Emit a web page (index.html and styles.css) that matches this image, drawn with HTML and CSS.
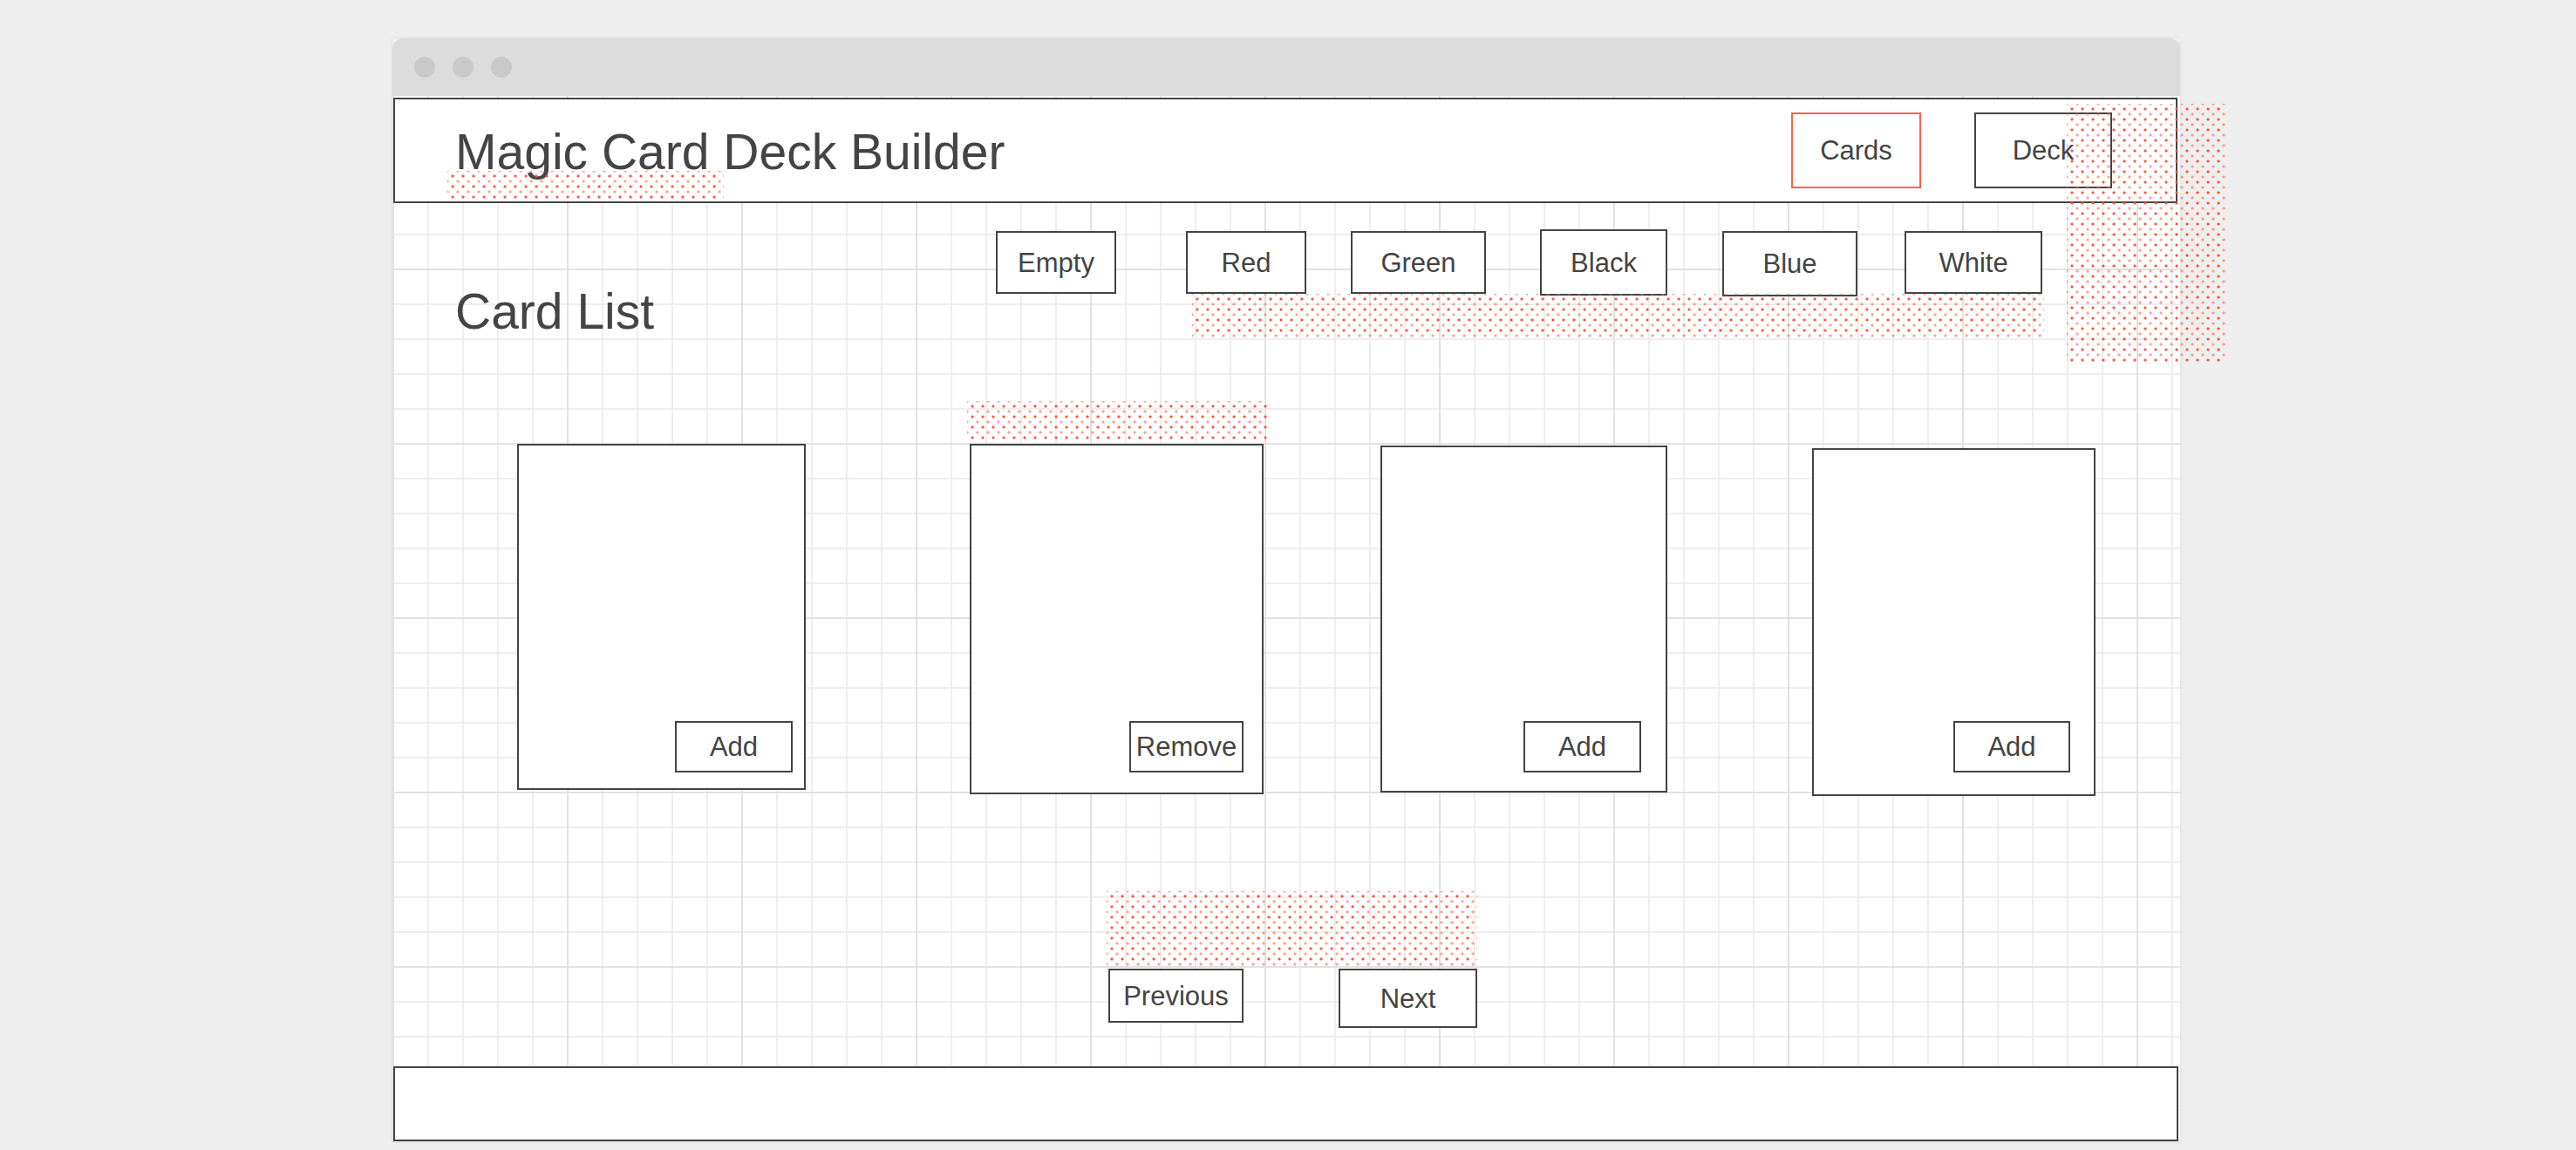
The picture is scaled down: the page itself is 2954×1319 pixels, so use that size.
FILE: index.html
```html
<!DOCTYPE html>
<html lang="en">
<head>
<meta charset="utf-8">
<title>Magic Card Deck Builder</title>
<link rel="stylesheet" href="styles.css">
</head>
<body>
<div class="window">
  <div class="titlebar">
    <span class="light"></span>
    <span class="light"></span>
    <span class="light"></span>
  </div>
  <div class="canvas">
    <header class="header">
      <h1 class="title">Magic Card Deck Builder</h1>
      <nav class="nav">
        <button class="btn nav-btn nav-btn--cards">Cards</button>
        <button class="btn nav-btn nav-btn--deck">Deck</button>
      </nav>
    </header>
    <main class="main">
      <div class="toolbar">
        <h2 class="subtitle">Card List</h2>
        <div class="filters">
          <button class="btn filter filter--empty">Empty</button>
          <button class="btn filter filter--red">Red</button>
          <button class="btn filter filter--green">Green</button>
          <button class="btn filter filter--black">Black</button>
          <button class="btn filter filter--blue">Blue</button>
          <button class="btn filter filter--white">White</button>
        </div>
      </div>
      <div class="cards">
        <div class="card card--1"><button class="btn card-btn card-btn--add">Add</button></div>
        <div class="card card--2"><button class="btn card-btn card-btn--remove">Remove</button></div>
        <div class="card card--3"><button class="btn card-btn card-btn--add">Add</button></div>
        <div class="card card--4"><button class="btn card-btn card-btn--add card-btn--narrow">Add</button></div>
      </div>
      <div class="pager">
        <button class="btn page-btn page-btn--prev">Previous</button>
        <button class="btn page-btn page-btn--next">Next</button>
      </div>
    </main>
    <footer class="footer"></footer>
  </div>
  <div class="dots dots--title"></div>
  <div class="dots dots--filters"></div>
  <div class="dots dots--nav"></div>
  <div class="dots dots--card"></div>
  <div class="dots dots--pager"></div>
</div>
</body>
</html>
```

FILE: styles.css
```css
* { box-sizing: border-box; }

html, body {
  margin: 0;
  padding: 0;
}

body {
  background: #eeeeee;
  font-family: "Liberation Sans", Arial, sans-serif;
  color: #444444;
  overflow: hidden;
  height: 1319px;
}

.window {
  position: relative;
  width: 2050px;
  margin: 44px 0 0 450px;
  box-shadow: 0 0 4px rgba(0, 0, 0, 0.08);
}

.titlebar {
  height: 66px;
  background: #dcdcdc;
  border-radius: 12px 12px 0 0;
  display: flex;
  align-items: center;
  gap: 20px;
  padding-left: 25px;
}

.light {
  width: 24px;
  height: 24px;
  border-radius: 50%;
  background: #c9c9c9;
}

.canvas {
  background-color: #ffffff;
  background-image:
    linear-gradient(to right, #e1e1e1 0 2px, transparent 2px),
    linear-gradient(to bottom, #e1e1e1 0 2px, transparent 2px),
    linear-gradient(to right, #eeeeee 0 2px, transparent 2px),
    linear-gradient(to bottom, #eeeeee 0 2px, transparent 2px);
  background-size: 200px 100%, 100% 200px, 40px 100%, 100% 40px;
  background-position: 0 0, 0 -2px, 0 0, 0 -2px;
  padding-top: 2px;
  padding-bottom: 1px;
}

.btn {
  font-family: "Liberation Sans", Arial, sans-serif;
  font-size: 31px;
  color: #444444;
  background: #ffffff;
  border: 2px solid #444444;
  border-radius: 0;
  padding: 0;
  margin: 0;
  display: flex;
  align-items: center;
  justify-content: center;
  line-height: 1;
}

/* Header */
.header {
  height: 121px;
  margin: 0 3px 0 1px;
  border: 2px solid #444444;
  background: #ffffff;
  display: flex;
  align-items: center;
  padding: 0 73px 0 69px;
}

.title {
  margin: 3px 0 0 0;
  font-size: 57px;
  line-height: 56px;
  font-weight: normal;
}

.nav {
  margin-left: auto;
  display: flex;
  gap: 61px;
}

.nav-btn { height: 87px; }
.nav-btn--cards { width: 149px; border-color: #ff6347; }
.nav-btn--deck { width: 158px; }

/* Main */
.main {
  padding-left: 72px;
}

.toolbar {
  display: flex;
  align-items: flex-start;
  margin-top: 30px;
}

.subtitle {
  flex: 0 0 620px;
  margin: 66px 0 0 0;
  font-size: 57px;
  line-height: 56px;
  font-weight: normal;
}

.filters {
  display: flex;
  align-items: flex-start;
}

.filter { height: 72px; margin-top: 2px; }
.filter--empty { width: 138px; }
.filter--red { width: 138px; margin-left: 80px; }
.filter--green { width: 155px; margin-left: 51px; }
.filter--black { width: 146px; height: 76px; margin-top: 0; margin-left: 62px; }
.filter--blue { width: 155px; height: 75px; margin-left: 63px; }
.filter--white { width: 158px; margin-left: 54px; }

/* Cards */
.cards {
  display: flex;
  align-items: flex-start;
  margin-top: 124px;
}

.card {
  width: var(--w);
  height: var(--h);
  margin-left: var(--ml);
  margin-top: var(--mt);
  padding-top: var(--pt);
  padding-right: var(--pr);
  border: 2px solid #444444;
  background: #ffffff;
  display: flex;
  justify-content: flex-end;
  align-items: flex-start;
}

.card--1 { --w: 331px; --h: 397px; --ml: 71px;  --mt: 0px; --pt: 316px; --pr: 13px; }
.card--2 { --w: 337px; --h: 402px; --ml: 188px; --mt: 0px; --pt: 316px; --pr: 21px; }
.card--3 { --w: 329px; --h: 398px; --ml: 134px; --mt: 2px; --pt: 314px; --pr: 28px; }
.card--4 { --w: 325px; --h: 399px; --ml: 166px; --mt: 5px; --pt: 311px; --pr: 27px; }

.card-btn { height: 59px; }
.card-btn--add { width: 135px; }
.card-btn--narrow { width: 134px; }
.card-btn--remove { width: 131px; }

/* Pager */
.pager {
  display: flex;
  align-items: flex-start;
  margin-top: 198px;
  padding-left: 749px;
}

.page-btn--prev { width: 155px; height: 62px; }
.page-btn--next { width: 159px; height: 68px; margin-left: 109px; }

/* Footer */
.footer {
  height: 86px;
  margin: 44px 2px 0 1px;
  border: 2px solid #444444;
  background: #ffffff;
}

/* Annotation dot overlays */
.dots {
  position: absolute;
  pointer-events: none;
  background-image:
    radial-gradient(circle, rgba(255, 75, 50, 0.95) 0 1.2px, rgba(255, 75, 50, 0) 1.9px),
    radial-gradient(circle, rgba(255, 100, 80, 0.6) 0 1.2px, rgba(255, 100, 80, 0) 2px);
  background-size: 12px 12px, 12px 12px;
  background-position: 0 0, 6px 6px;
}

.dots--title   { left: 63px;   top: 152px; width: 317px; height: 32px; }
.dots--filters { left: 917px;  top: 293px; width: 977px; height: 50px; }
.dots--nav     { left: 1920px; top: 75px;  width: 184px; height: 297px; }
.dots--card    { left: 659px;  top: 416px; width: 344px; height: 46px; }
.dots--pager   { left: 819px;  top: 978px; width: 425px; height: 88px; }
```
